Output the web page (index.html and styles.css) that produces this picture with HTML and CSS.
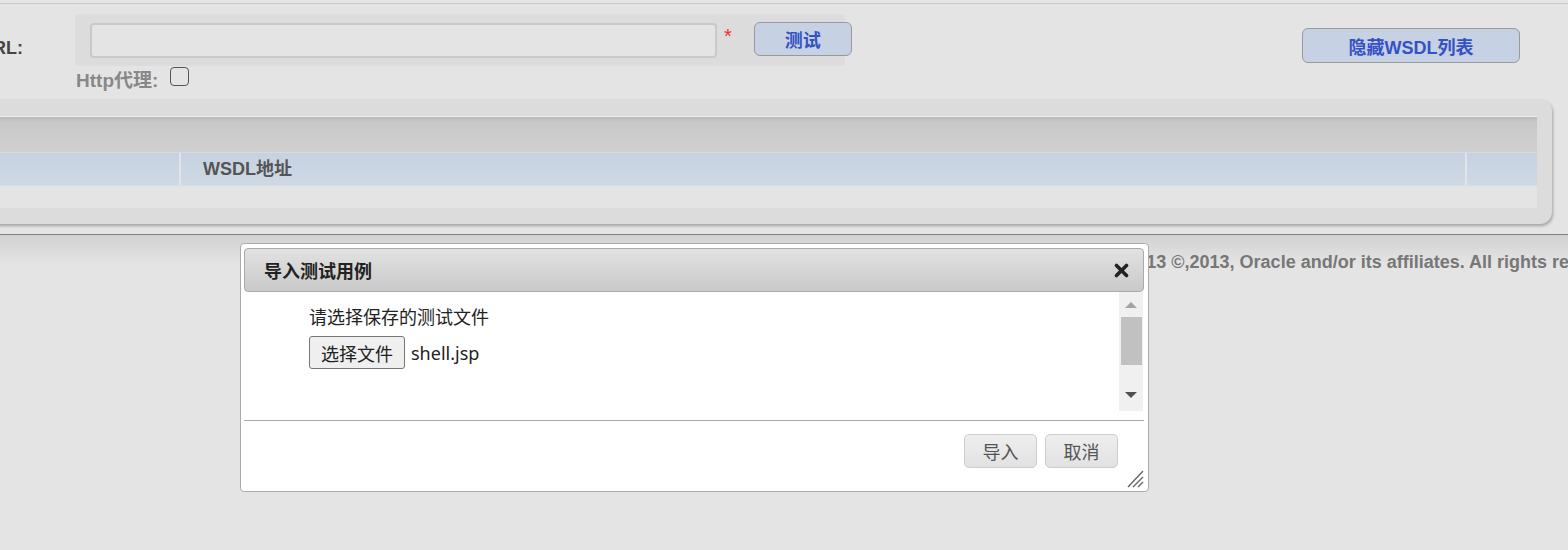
FILE: index.html
```html
<!DOCTYPE html>
<html lang="zh-CN">
<head>
<meta charset="UTF-8" />
<title>WSDL 测试</title>
<link rel="stylesheet" href="styles.css">
</head>
<body>
  <div class="topbar"></div>

  <div class="page">
    <div class="form">
      <div class="form-grid">
        <div class="label"><span>WSDL URL:</span></div>
        <div class="field-box">
          <input class="url-input" type="text" />
          <span class="required">*</span>
          <button class="btn-blue btn-test">测试</button>
        </div>
        <div></div>
        <div class="proxy">
          <span class="proxy-label">Http代理:</span>
          <input class="check" type="checkbox" />
        </div>
      </div>
      <button class="btn-blue btn-hide">隐藏WSDL列表</button>
    </div>

    <div class="panel">
      <div class="grid-caption"></div>
      <div class="grid-head">
        <div class="col col-a"></div>
        <div class="col col-b">WSDL地址</div>
        <div class="col col-c"></div>
      </div>
      <div class="grid-row"></div>
    </div>
  </div>

  <div class="footer">
    <span class="footer-text">Copyright © 2013 ©,2013, Oracle and/or its affiliates. All rights reserved.</span>
  </div>

  <div class="dialog">
    <div class="dialog-title">
      <span>导入测试用例</span>
      <svg class="close" width="15" height="15" viewBox="0 0 15 15">
        <path d="M2.5 2.5 L12.5 12.5 M12.5 2.5 L2.5 12.5" stroke="#222" stroke-width="3.6" stroke-linecap="round" />
      </svg>
    </div>
    <div class="dialog-body">
      <div class="dialog-content">
        <p class="hint">请选择保存的测试文件</p>
        <div class="file-row">
          <button class="file-btn">选择文件</button>
          <span class="file-name">shell.jsp</span>
        </div>
      </div>
      <div class="scrollbar">
        <span class="arrow-up"></span>
        <span class="thumb"></span>
        <span class="arrow-down"></span>
      </div>
    </div>
    <div class="dialog-foot">
      <button class="btn-grey">导入</button>
      <button class="btn-grey">取消</button>
    </div>
    <svg class="grip" width="18" height="19" viewBox="0 0 18 19">
      <path d="M17 2 L2 18 M17 8 L7 18 M17 13 L12 18" stroke="#666" stroke-width="1.4" />
    </svg>
  </div>
</body>
</html>
```

FILE: styles.css
```css
* {
  box-sizing: border-box;
}

body {
  margin: 0;
  background: #e4e4e4;
  font-family: "Liberation Sans", Arial, "Noto Sans CJK SC", sans-serif;
  font-size: 18px;
  color: #333;
  overflow: hidden;
  height: 550px;
  position: relative;
}

.topbar {
  height: 4px;
  border-bottom: 1px solid #cbcbcb;
}

.page {
  margin: 0 16px 0 -80px;
}

/* form */
.form {
  display: flex;
  justify-content: space-between;
  align-items: flex-start;
  padding-top: 10px;
}

.form-grid {
  display: grid;
  grid-template-columns: 155px 770px;
}

.label {
  display: flex;
  justify-content: flex-end;
  padding: 24px 52px 0 0;
  font-weight: bold;
  color: #444;
  line-height: 20px;
  white-space: nowrap;
  overflow: hidden;
}

.label span {
  flex-shrink: 0;
}

.field-box {
  display: flex;
  align-items: flex-start;
  height: 52px;
  padding: 9px 0 0 15px;
  background: #dcdcdc;
  border-radius: 5px;
}

.url-input {
  width: 627px;
  height: 35px;
  flex-shrink: 0;
  background: #e4e4e4;
  border: 2px solid #c9c9c9;
  border-radius: 4px;
  outline: none;
}

.required {
  color: #e33;
  font-size: 20px;
  line-height: 20px;
  margin: 3px 0 0 7px;
  width: 8px;
}

.btn-blue {
  flex-shrink: 0;
  background: #c6d1e4;
  border: 1px solid #999;
  border-radius: 6px;
  color: #3552c4;
  font-family: inherit;
  font-size: 18px;
  font-weight: bold;
  padding: 0;
}

.btn-test {
  width: 98px;
  height: 34px;
  margin-left: 22px;
  margin-top: -1px;
}

.btn-hide {
  width: 218px;
  height: 35px;
  margin: 14px 32px 0 0;
}

.proxy {
  display: flex;
  align-items: flex-start;
  height: 33px;
}

.proxy-label {
  font-size: 19px;
  font-weight: bold;
  color: #888;
  line-height: 20px;
  padding: 5px 0 0 1px;
}

.check {
  appearance: none;
  width: 19px;
  height: 19px;
  margin: 1px 0 0 12px;
  border: 1.5px solid #555;
  border-radius: 4px;
  background: transparent;
}

/* table panel */
.panel {
  background: #dcdcdc;
  border-radius: 0 12px 12px 0;
  padding: 17px 15px 16px 0;
  box-shadow: 1px 2px 3px rgba(0, 0, 0, 0.28);
}

.grid-caption {
  height: 37px;
  border-top: 1px solid #ececec;
  background: linear-gradient(#b9b9b9, #c8c8c8 5px, #d0d0d0);
  border-bottom: 1px solid #dadada;
}

.grid-head {
  display: flex;
  height: 33px;
  background: linear-gradient(#c6d2e2, #cfd9e4);
  border-bottom: 1px solid #d6dde6;
}

.col {
  border-right: 2px solid #e2e4e8;
  font-weight: bold;
  color: #555;
  line-height: 33px;
}

.col-a {
  width: 261px;
}

.col-b {
  flex: 1;
  padding-left: 22px;
}

.col-c {
  width: 70px;
  border-right: none;
}

.grid-row {
  height: 22px;
  background: #e4e4e4;
}

/* footer */
.footer {
  margin-top: 10px;
  border-top: 1px solid #808080;
  background: linear-gradient(#d2d2d2, #e4e4e4 30px);
  height: 60px;
  padding: 17px 0 0 1018px;
  white-space: nowrap;
}

.footer-text {
  font-weight: bold;
  color: #777;
  line-height: 20px;
}

/* dialog */
.dialog {
  position: absolute;
  left: 240px;
  top: 243px;
  width: 909px;
  height: 249px;
  background: #fff;
  border: 1px solid #aaa;
  border-radius: 4px;
  padding: 4px 4px 0 3px;
}

.dialog-title {
  display: flex;
  justify-content: space-between;
  align-items: center;
  height: 44px;
  padding: 0 14px 0 19px;
  background: linear-gradient(#e2e2e2, #c9c9c9);
  border: 1px solid #aaa;
  border-radius: 4px;
  font-weight: bold;
  color: #222;
}

.dialog-body {
  display: flex;
  height: 119px;
}

.dialog-content {
  flex: 1;
  padding: 15px 0 0 65px;
}

.hint {
  margin: 0 0 7px;
  line-height: 22px;
  color: #222;
}

.file-row {
  display: flex;
  align-items: center;
}

.file-btn {
  height: 33px;
  width: 96px;
  background: #efefef;
  border: 1px solid #767676;
  border-radius: 3px;
  font-family: inherit;
  font-size: 18px;
  color: #222;
  padding: 0;
}

.file-name {
  margin-left: 6px;
  color: #222;
  font-family: "Noto Sans", "Noto Sans CJK SC", sans-serif;
}

.scrollbar {
  width: 24px;
  background: #f0f0f0;
  display: flex;
  flex-direction: column;
  align-items: center;
  margin-right: 1px;
}

.arrow-up,
.arrow-down {
  width: 0;
  height: 0;
  border-left: 6px solid transparent;
  border-right: 6px solid transparent;
}

.arrow-up {
  border-bottom: 6px solid #a3a3a3;
  margin-top: 10px;
}

.arrow-down {
  border-top: 6px solid #505050;
  margin-top: 27px;
}

.thumb {
  width: 21px;
  height: 48px;
  background: #c1c1c1;
  margin-top: 9px;
}

.dialog-foot {
  margin-top: 9px;
  border-top: 1px solid #aaa;
  display: flex;
  justify-content: flex-end;
  gap: 8px;
  padding: 13px 26px 0 0;
}

.btn-grey {
  width: 73px;
  height: 34px;
  background: linear-gradient(#eeeeee, #e2e2e2);
  border: 1px solid #ccc;
  border-radius: 5px;
  font-family: inherit;
  font-size: 18px;
  color: #555;
  padding: 0;
}

.grip {
  position: absolute;
  right: 4px;
  bottom: 3px;
}
```
